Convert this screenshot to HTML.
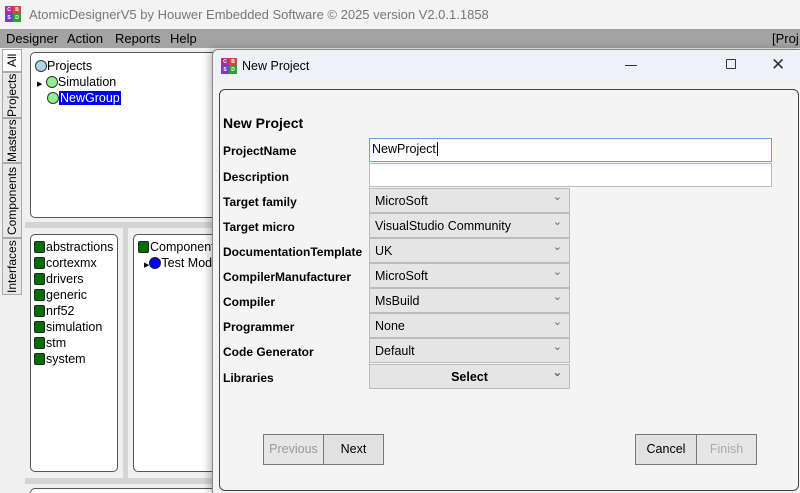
<!DOCTYPE html>
<html><head><style>
*{box-sizing:border-box;margin:0;padding:0}
html,body{width:800px;height:493px;overflow:hidden}
body{background:#f0f0f0;font-family:"Liberation Sans",sans-serif;font-size:12px;position:relative;white-space:nowrap}
.a{position:absolute}
.logo{display:grid;grid-template-columns:1fr 1fr;width:16px;height:16px;font-size:5px;color:#fff;text-align:center;line-height:8px;font-weight:bold}
.logo span:nth-child(1){background:#b03090}.logo span:nth-child(2){background:#e04040}.logo span:nth-child(3){background:#7040c0}.logo span:nth-child(4){background:#30a030}
.panel{position:absolute;background:#fff;border:1px solid #555;border-radius:5px;overflow:hidden}
.tab{position:absolute;left:2px;width:20px;background:#e8e8e8;border:1px solid #aaa;writing-mode:vertical-rl;transform:rotate(180deg);font-size:12px;text-align:center;line-height:18px}
.sq{display:inline-block;width:11px;height:12px;background:#007000;border:1px solid #222;border-radius:2px;vertical-align:-2px;margin-right:1px}
.lbl{position:absolute;left:223px;font-weight:bold;font-size:12px}
.cb{position:absolute;left:369px;width:201px;height:25px;background:#e5e5e5;border:1px solid #bbb;padding:5px 5px;font-size:12.5px}
.cb:after{content:"⌄";position:absolute;right:7px;top:1px;color:#666;font-size:11px}
.btn{position:absolute;top:434px;height:31px;border:1px solid #777;background:#e1e1e1;text-align:center;line-height:29px;font-size:12.5px}
.tree{font-size:12.5px}
</style></head><body>
<div class="a" style="left:0;top:0;width:800px;height:29px;background:#f3f3f3"></div>
<div class="a logo" style="left:5px;top:6px"><span>C</span><span>B</span><span>S</span><span>D</span></div>
<div class="a" style="left:29px;top:7px;color:#777;font-size:13px">AtomicDesignerV5 by Houwer Embedded Software © 2025 version V2.0.1.1858</div>
<div class="a" style="left:0;top:29px;width:800px;height:19px;background:#a3a3a3"></div>
<div class="a" style="left:6px;top:31px;font-size:13px">Designer</div>
<div class="a" style="left:67px;top:31px;font-size:13px">Action</div>
<div class="a" style="left:115px;top:31px;font-size:13px">Reports</div>
<div class="a" style="left:170px;top:31px;font-size:13px">Help</div>
<div class="a" style="left:772px;top:31px;font-size:13px">[Proj</div>
<div class="a" style="left:0;top:48px;width:25px;height:445px;background:#f0f0f0"></div>
<div class="tab" style="top:49px;height:23px;background:#fff">All</div>
<div class="tab" style="top:72px;height:46px">Projects</div>
<div class="tab" style="top:118px;height:45px">Masters</div>
<div class="tab" style="top:163px;height:75px">Components</div>
<div class="tab" style="top:238px;height:57px">Interfaces</div>
<div class="a" style="left:25px;top:222px;width:200px;height:6px;background:#d4d4d4"></div>
<div class="a" style="left:25px;top:478px;width:200px;height:6px;background:#d4d4d4"></div>
<div class="panel tree" style="left:30px;top:52px;width:260px;height:166px">
<div class="a" style="left:4px;top:6px"><span style="display:inline-block;width:12px;height:12px;border-radius:50%;background:#add8e6;border:1px solid #333;vertical-align:-2px"></span>Projects</div>
<div class="a" style="left:6px;top:22px"><span style="font-size:7px">▶</span> <span style="display:inline-block;width:12px;height:12px;border-radius:50%;background:#90ee90;border:1px solid #333;vertical-align:-2px"></span>Simulation</div>
<div class="a" style="left:16px;top:38px"><span style="display:inline-block;width:12px;height:12px;border-radius:50%;background:#90ee90;border:1px solid #333;vertical-align:-2px"></span><span style="background:#0000ee;color:#fff;padding:0 1px">NewGroup</span></div>
</div>
<div class="panel tree" style="left:30px;top:234px;width:88px;height:238px;line-height:16px;padding:4px 3px">
<div><span class="sq"></span>abstractions</div><div><span class="sq"></span>cortexmx</div><div><span class="sq"></span>drivers</div><div><span class="sq"></span>generic</div><div><span class="sq"></span>nrf52</div><div><span class="sq"></span>simulation</div><div><span class="sq"></span>stm</div><div><span class="sq"></span>system</div>
</div>
<div class="a" style="left:123px;top:228px;width:5px;height:250px;background:#d4d4d4"></div>
<div class="panel tree" style="left:133px;top:234px;width:100px;height:238px;line-height:16px;padding:4px 4px">
<div><span class="sq"></span>Component</div><div style="padding-left:6px"><span style="font-size:7px">▶</span><span style="display:inline-block;width:12px;height:12px;border-radius:50%;background:#00f;border:1px solid #222;vertical-align:-2px"></span>Test Mod</div>
</div>
<div class="panel" style="left:30px;top:488px;width:200px;height:20px"></div>
<!-- dialog -->
<div class="a" style="left:212px;top:49px;width:590px;height:446px;background:#f3f3f3;border:1px solid #888;border-radius:6px 0 0 0;box-shadow:-3px 0 8px rgba(0,0,0,.25)"></div>
<div class="a" style="left:213px;top:50px;width:587px;height:32px;background:#eef2f7;border-radius:6px 0 0 0"></div>
<div class="a logo" style="left:221px;top:58px"><span>C</span><span>B</span><span>S</span><span>D</span></div>
<div class="a" style="left:242px;top:59px;font-size:12.5px">New Project</div>
<div class="a" style="left:625px;top:65px;width:12px;height:1px;background:#333"></div>
<div class="a" style="left:726px;top:59px;width:10px;height:10px;border:1px solid #333;border-radius:1px"></div>
<div class="a" style="left:771px;top:55px;font-size:17px;color:#333">✕</div>
<div class="a" style="left:219px;top:89px;width:580px;height:402px;border:1px solid #444;border-radius:6px;background:#f4f4f4"></div>
<div class="lbl" style="top:115px;font-size:14px">New Project</div>
<div class="lbl" style="top:144px">ProjectName</div>
<div class="lbl" style="top:170px">Description</div>
<div class="lbl" style="top:195px">Target family</div>
<div class="lbl" style="top:220px">Target micro</div>
<div class="lbl" style="top:245px">DocumentationTemplate</div>
<div class="lbl" style="top:270px">CompilerManufacturer</div>
<div class="lbl" style="top:295px">Compiler</div>
<div class="lbl" style="top:320px">Programmer</div>
<div class="lbl" style="top:345px">Code Generator</div>
<div class="lbl" style="top:371px">Libraries</div>
<div class="a" style="left:369px;top:138px;width:403px;height:24px;background:#fff;border:1px solid #6aa0e0;padding:3px 2px;font-size:12.5px">NewProject<span style="border-left:1px solid #000;margin-left:1px"></span></div>
<div class="a" style="left:369px;top:163px;width:403px;height:24px;background:#fff;border:1px solid #bbb"></div>
<div class="cb" style="top:188px">MicroSoft</div>
<div class="cb" style="top:213px">VisualStudio Community</div>
<div class="cb" style="top:238px">UK</div>
<div class="cb" style="top:263px">MicroSoft</div>
<div class="cb" style="top:288px">MsBuild</div>
<div class="cb" style="top:313px">None</div>
<div class="cb" style="top:338px">Default</div>
<div class="cb" style="top:364px;text-align:center;font-weight:bold">Select</div>
<div class="btn" style="left:263px;width:61px;color:#999;background:#e6e6e6">Previous</div>
<div class="btn" style="left:323px;width:61px">Next</div>
<div class="btn" style="left:635px;width:62px">Cancel</div>
<div class="btn" style="left:696px;width:61px;color:#aaa;background:#e6e6e6">Finish</div>
</body></html>
